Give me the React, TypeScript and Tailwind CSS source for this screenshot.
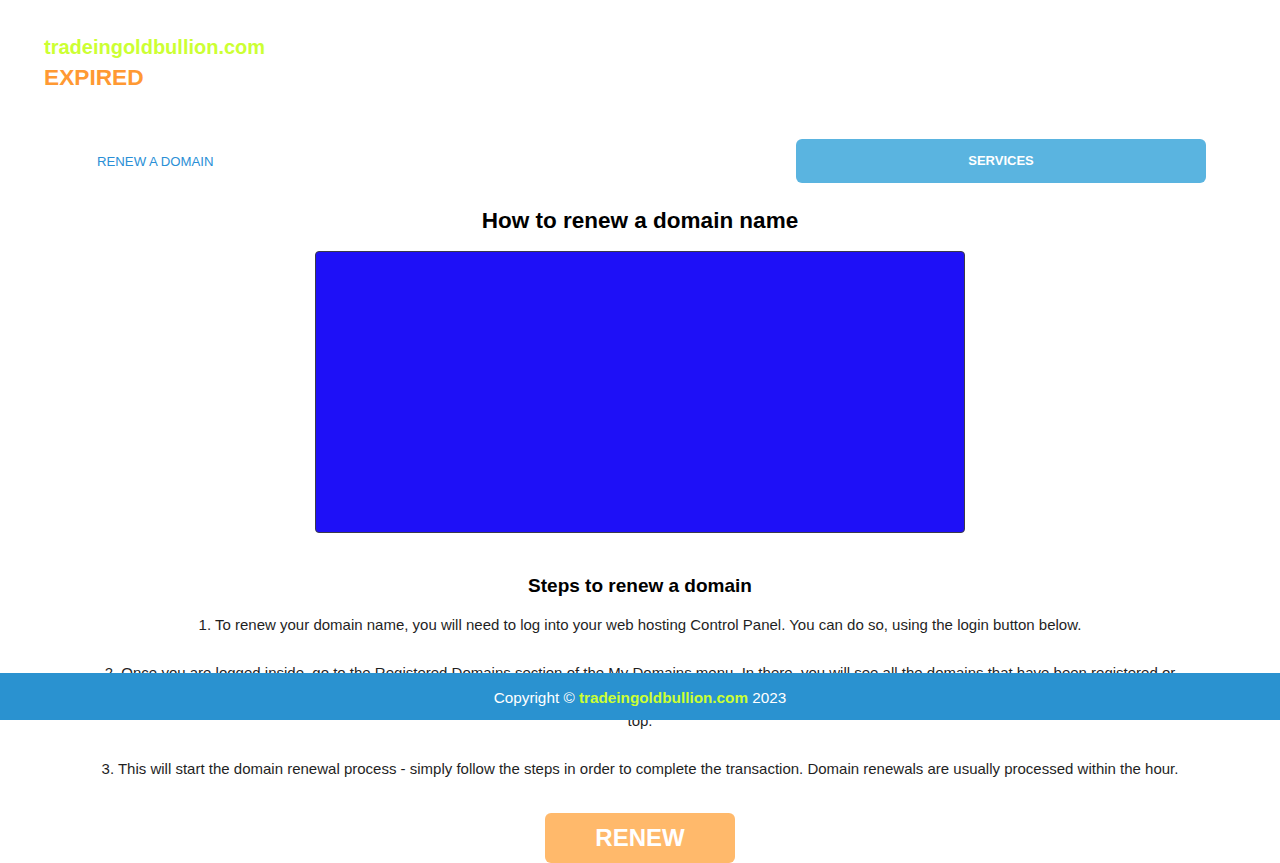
import React from 'react';

const font = { fontFamily: '"Liberation Sans", Arial, sans-serif' };

const App: React.FC = () => {
    return (
        <div className="relative min-h-[863px] bg-white text-[#1f1f1f]" style={font}>
            {/* header */}
            <header className="pl-[44px] pt-[35px]">
                <div className="text-[20px] leading-[24px] font-bold text-[#ccff33]">tradeingoldbullion.com</div>
                <div className="mt-[4px] text-[22.7px] leading-[28px] font-bold text-[#ff9933]">EXPIRED</div>
            </header>

            {/* nav */}
            <nav className="mt-[48px] flex items-center justify-between pl-[97px] pr-[74px]">
                <a href="#" className="mt-[2px] text-[13.2px] leading-[16px] text-[#2a8fd6]">RENEW A DOMAIN</a>
                <a
                    href="#"
                    className="flex h-[44px] w-[410px] items-center justify-center rounded-[6px] bg-[#5ab4e0] text-[13px] font-bold text-white"
                >
                    SERVICES
                </a>
            </nav>

            <main className="flex flex-col items-center">
                <h1 className="mt-[24px] text-[22.5px] leading-[28px] font-bold text-black">How to renew a domain name</h1>
                <div className="mt-[16px] h-[282px] w-[650px] rounded-[4px] border border-[#3a3a4a] bg-[#1e10f7]" />

                <h2 className="mt-[41px] text-[19px] leading-[24px] font-bold text-black">Steps to renew a domain</h2>

                <div className="mt-[15px] flex w-full flex-col gap-[24px] px-[60px] text-center text-[15px] leading-[24px] text-[#1f1f1f]">
                    <p>
                        1. To renew your domain name, you will need to log into your web hosting Control Panel. You can do so, using the login button below.
                    </p>
                    <p>
                        2. Once you are logged inside, go to the Registered Domains section of the My Domains menu. In there, you will see all the domains that have been registered or
                        <br />
                        transferred through your account. Select the domain that you wish to renew and then click on the Renew button at the
                        <br />
                        top.
                    </p>
                    <p>
                        3. This will start the domain renewal process - simply follow the steps in order to complete the transaction. Domain renewals are usually processed within the hour.
                    </p>
                </div>

                <button className="mt-[32px] h-[50px] w-[190px] rounded-[6px] bg-[#ffb96b] text-[24px] font-bold text-white">
                    RENEW
                </button>
            </main>

            {/* footer sits over the steps */}
            <footer className="absolute left-0 right-0 top-[673px] flex h-[47px] items-center justify-center bg-[#2a92d0] pt-[3px] text-[15.3px] text-white">
                <span>
                    Copyright © <span className="font-bold text-[#ccff33]">tradeingoldbullion.com</span> 2023
                </span>
            </footer>
        </div>
    );
};

export default App;
